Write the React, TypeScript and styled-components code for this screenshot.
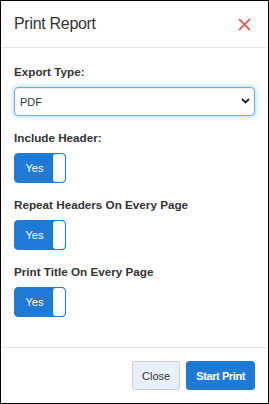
import { createGlobalStyle, styled } from 'styled-components'

const GlobalStyle = createGlobalStyle`
  html, body {
    margin: 0;
    padding: 0;
    background: #ffffff;
  }
  body {
    font-family: "Liberation Sans", Arial, sans-serif;
    color: #333333;
  }
`

const Modal = styled.div`
  box-sizing: border-box;
  width: 269px;
  height: 404px;
  border: 1px solid #000000;
  background: #ffffff;
  display: flex;
  flex-direction: column;
`
const Header = styled.div`
  height: 46px;
  border-bottom: 1px solid #e5e5e5;
  display: flex;
  align-items: center;
  justify-content: space-between;
  padding: 0 17px 0 13px;
`
const Title = styled.h4`
  margin: 0;
  font-size: 16px;
  letter-spacing: -0.3px;
  font-weight: normal;
  color: #333333;
`
const CloseIcon = styled.button`
  border: none;
  background: none;
  padding: 0;
  width: 14px;
  height: 14px;
  display: flex;
  align-items: center;
  justify-content: center;
  cursor: pointer;
`
const Body = styled.div`
  flex: 1;
  padding: 16px 13px 0;
  display: flex;
  flex-direction: column;
  gap: 14px;
`
const Field = styled.div`
  display: flex;
  flex-direction: column;
  gap: 7px;
`
const Label = styled.label`
  font-size: 11.7px;
  line-height: 16px;
  font-weight: bold;
  color: #333333;
`
const SelectWrap = styled.div`
  position: relative;
  width: 241px;
`
const Select = styled.select`
  appearance: none;
  box-sizing: border-box;
  width: 100%;
  height: 29px;
  border: 1px solid #66afe9;
  border-radius: 4px;
  box-shadow: inset 0 1px 1px rgba(0, 0, 0, 0.075), 0 0 6px rgba(102, 175, 233, 0.6);
  padding: 0 20px 0 5px;
  font-family: inherit;
  font-size: 11px;
  color: #333333;
  background: #ffffff;
  outline: none;
`
const Chevron = styled.svg`
  position: absolute;
  right: 5px;
  top: 11px;
  pointer-events: none;
`
const Toggle = styled.div`
  box-sizing: border-box;
  width: 52px;
  height: 30px;
  border: 1px solid #1f7ad6;
  border-radius: 4px;
  background: #1f7ad6;
  display: flex;
  overflow: hidden;
`
const ToggleOn = styled.span`
  flex: 1;
  display: flex;
  align-items: center;
  justify-content: center;
  padding-left: 1px;
  color: #ffffff;
  font-size: 11px;
`
const Knob = styled.span`
  width: 12px;
  background: #ffffff;
  border-radius: 3px;
`
const Footer = styled.div`
  border-top: 1px solid #e5e5e5;
  padding: 13px 13px 13px 0;
  display: flex;
  justify-content: flex-end;
  gap: 6px;
`
const Button = styled.button<{ $primary?: boolean }>`
  box-sizing: border-box;
  height: 29px;
  padding: 0 ${p => (p.$primary ? '9px' : '9px')};
  border-radius: 3px;
  font-family: inherit;
  font-size: 11px;
  font-weight: ${p => (p.$primary ? 'bold' : 'normal')};
  letter-spacing: ${p => (p.$primary ? '-0.4px' : '0')};
  border: 1px solid ${p => (p.$primary ? '#1f7ad6' : '#c9cdd2')};
  background: ${p => (p.$primary ? '#1f7ad6' : '#e8f1fb')};
  color: ${p => (p.$primary ? '#ffffff' : '#333333')};
  cursor: pointer;
`

const switches = ['Include Header:', 'Repeat Headers On Every Page', 'Print Title On Every Page']

function SwitchField({ label }: { label: string }) {
  return (
    <Field>
      <Label>{label}</Label>
      <Toggle>
        <ToggleOn>Yes</ToggleOn>
        <Knob />
      </Toggle>
    </Field>
  )
}

export default function App() {
  return (
    <>
      <GlobalStyle />
      <Modal>
        <Header>
          <Title>Print Report</Title>
          <CloseIcon aria-label="Close">
            <svg width="13" height="13" viewBox="0 0 13 13">
              <path d="M1 1L12 12M12 1L1 12" stroke="#e06666" strokeWidth="1.8" fill="none" />
            </svg>
          </CloseIcon>
        </Header>
        <Body>
          <Field>
            <Label>Export Type:</Label>
            <SelectWrap>
              <Select defaultValue="PDF">
                <option>PDF</option>
                <option>Excel</option>
                <option>CSV</option>
              </Select>
              <Chevron width="9" height="6" viewBox="0 0 9 6">
                <path d="M1 1L4.5 4.5L8 1" stroke="#222222" strokeWidth="1.8" fill="none" />
              </Chevron>
            </SelectWrap>
          </Field>
          {switches.map(s => (
            <SwitchField key={s} label={s} />
          ))}
        </Body>
        <Footer>
          <Button>Close</Button>
          <Button $primary>Start Print</Button>
        </Footer>
      </Modal>
    </>
  )
}
